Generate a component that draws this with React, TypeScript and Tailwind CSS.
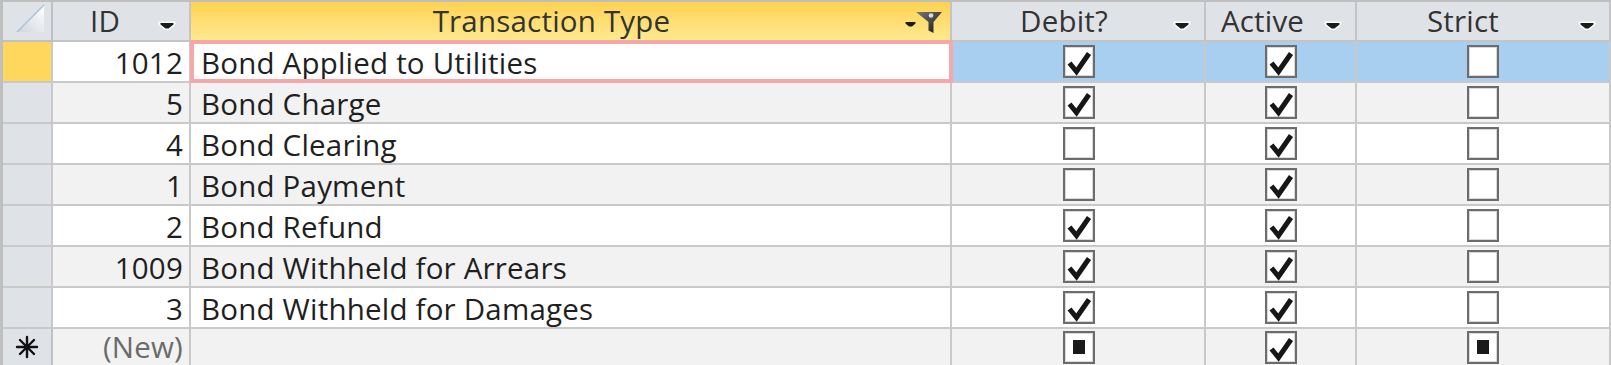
import React from 'react';

type Flag = 'on' | 'off' | 'mixed';

const rows: { id: string; type: string; debit: Flag; active: Flag; strict: Flag }[] = [
  { id: '1012', type: 'Bond Applied to Utilities', debit: 'on', active: 'on', strict: 'off' },
  { id: '5', type: 'Bond Charge', debit: 'on', active: 'on', strict: 'off' },
  { id: '4', type: 'Bond Clearing', debit: 'off', active: 'on', strict: 'off' },
  { id: '1', type: 'Bond Payment', debit: 'off', active: 'on', strict: 'off' },
  { id: '2', type: 'Bond Refund', debit: 'on', active: 'on', strict: 'off' },
  { id: '1009', type: 'Bond Withheld for Arrears', debit: 'on', active: 'on', strict: 'off' },
  { id: '3', type: 'Bond Withheld for Damages', debit: 'on', active: 'on', strict: 'off' },
];

function DropArrow() {
  return (
    <svg width="20" height="12" viewBox="0 0 20 12" className="mt-[10px] shrink-0">
      <path d="M1.5 1.5 H18.5 V4.5 L12.5 10 H7.5 L1.5 4.5 Z" fill="#ffffff" opacity="0.9" />
      <path d="M3.5 3 H16.5 V4.6 L11.5 8.5 H8.5 L3.5 4.6 Z" fill="#1c1c1c" />
    </svg>
  );
}

function FilterIcon() {
  return (
    <svg width="40" height="24" viewBox="0 0 40 24" className="mt-[2px] shrink-0">
      <defs>
        <linearGradient id="fg" x1="0" y1="0" x2="1" y2="1">
          <stop offset="0" stopColor="#7a7a7a" />
          <stop offset="1" stopColor="#151515" />
        </linearGradient>
      </defs>
      <path d="M1.5 12 H11.5 V13.5 L8 16.5 H5 L1.5 13.5 Z" fill="#1c1c1c" />
      <path d="M12 2 H38 L29.5 12 V23 L24.5 20.5 V12 Z" fill="url(#fg)" />
      <circle cx="27" cy="5.5" r="2.3" fill="#dcdcdc" />
    </svg>
  );
}

function SelectAll() {
  return (
    <svg width="30" height="30" viewBox="0 0 30 30">
      <defs>
        <linearGradient id="sa" x1="1" y1="0" x2="0" y2="1">
          <stop offset="0" stopColor="#ffffff" />
          <stop offset="1" stopColor="#cfd5dc" />
        </linearGradient>
      </defs>
      <path d="M1 28 L28 1 V28 Z" fill="url(#sa)" />
      <path d="M1 28 L28 1" stroke="#a9c0dc" strokeWidth="1.5" />
    </svg>
  );
}

function Star() {
  return (
    <svg width="24" height="24" viewBox="0 0 24 24">
      <g stroke="#111111" strokeWidth="2.4" strokeLinecap="round">
        <line x1="12" y1="2" x2="12" y2="22" />
        <line x1="2" y1="12" x2="22" y2="12" />
        <line x1="5" y1="5" x2="19" y2="19" />
        <line x1="19" y1="5" x2="5" y2="19" />
      </g>
      <circle cx="12" cy="12" r="3" fill="#111111" />
    </svg>
  );
}

function Box({ v }: { v: Flag }) {
  return (
    <div className="flex h-[33px] w-[32px] items-center justify-center border-2 border-[#6c6c6c] bg-white shadow-[inset_0_0_0_1px_#d9d9d9]">
      {v === 'on' && (
        <svg width="28" height="29" viewBox="0 0 28 29">
          <path d="M4.5 16 L11.5 24.5 L24 6.5" fill="none" stroke="#161616" strokeWidth="5" strokeLinejoin="miter" />
        </svg>
      )}
      {v === 'mixed' && <div className="h-[14px] w-[12px] bg-[#1a1a1a]" />}
    </div>
  );
}

const cell = 'h-[41px] border-r-2 border-b-2 border-[#c9c9c9]';
// last row is cut off by the window, so no bottom rule
const last = 'h-[36px] border-r-2 border-[#c9c9c9] bg-[#f2f2f2]';
const head = 'flex h-[40px] items-center border-r-2 border-b-2 border-[#c4c4c4] bg-[#dfe3e8] pr-[12px]';

export default function App() {
  return (
    <div className="h-[365px] w-[1611px] overflow-hidden bg-white font-['Open_Sans',sans-serif] text-[29.5px] leading-none tracking-[0.2px] text-[#1f1f1f]">
      <div className="grid grid-cols-[50px_138px_761px_254px_151px_254px] border-t-2 border-l-[3px] border-[#bfbfbf]">
        {/* header */}
        <div className="flex h-[40px] items-start justify-start border-r-2 border-b-2 border-[#bcc1c7] bg-[#dfe3e8] pt-[2px] pl-[13px]">
          <SelectAll />
        </div>
        <div className={head}>
          <span className="flex-1 text-center text-[#333]">ID</span>
          <DropArrow />
        </div>
        <div className="flex h-[40px] items-center border-r-2 border-b-2 border-[#c4c4c4] bg-gradient-to-b from-[#ffd24f] to-[#ffe98e] pr-[6px]">
          <span className="flex-1 pl-[8px] text-center text-[#333]">Transaction Type</span>
          <FilterIcon />
        </div>
        <div className={head}>
          <span className="flex-1 pl-[4px] text-center text-[#333]">Debit?</span>
          <DropArrow />
        </div>
        <div className={head}>
          <span className="flex-1 pr-[4px] text-center text-[#333]">Active</span>
          <DropArrow />
        </div>
        <div className={head}>
          <span className="flex-1 pr-[8px] text-center text-[#333]">Strict</span>
          <DropArrow />
        </div>

        {rows.map((r, i) => {
          const sel = i === 0;
          const bg = i % 2 === 0 ? 'bg-white' : 'bg-[#f2f2f2]';
          const flagBg = sel ? 'bg-[#a8cef0]' : bg;
          return (
            <React.Fragment key={r.id}>
              <div className={`${cell} border-[#bcc1c7] ${sel ? 'bg-[#ffd75c]' : 'bg-[#dfe3e8]'}`} />
              <div className={`${cell} ${bg} flex items-center justify-end pr-[6px] pt-[2px]`}>{r.id}</div>
              <div className={`${cell} ${bg} relative flex items-center pl-[10px] pt-[2px]`}>
                {r.type}
                {sel && (
                  <div className="absolute -top-[2px] -right-[3px] -bottom-[2px] -left-[1px] border-4 border-[#f6a7aa]" />
                )}
              </div>
              <div className={`${cell} ${flagBg} flex items-center justify-center pl-[2px]`}>
                <Box v={r.debit} />
              </div>
              <div className={`${cell} ${flagBg} flex items-center justify-center`}>
                <Box v={r.active} />
              </div>
              <div className={`${cell} ${flagBg} flex items-center justify-center`}>
                <Box v={r.strict} />
              </div>
            </React.Fragment>
          );
        })}

        {/* new record row */}
        <div className="flex h-[36px] items-center justify-center border-r-2 border-[#bcc1c7] bg-[#dfe3e8]">
          <Star />
        </div>
        <div className={`${last} flex items-center justify-end pr-[6px] text-[#6b6b6b]`}>
          <span className="leading-[1.2]">(New)</span>
        </div>
        <div className={last} />
        <div className={`${last} flex items-center justify-center pl-[2px]`}>
          <Box v="mixed" />
        </div>
        <div className={`${last} flex items-center justify-center`}>
          <Box v="on" />
        </div>
        <div className={`${last} flex items-center justify-center`}>
          <Box v="mixed" />
        </div>
      </div>
    </div>
  );
}
